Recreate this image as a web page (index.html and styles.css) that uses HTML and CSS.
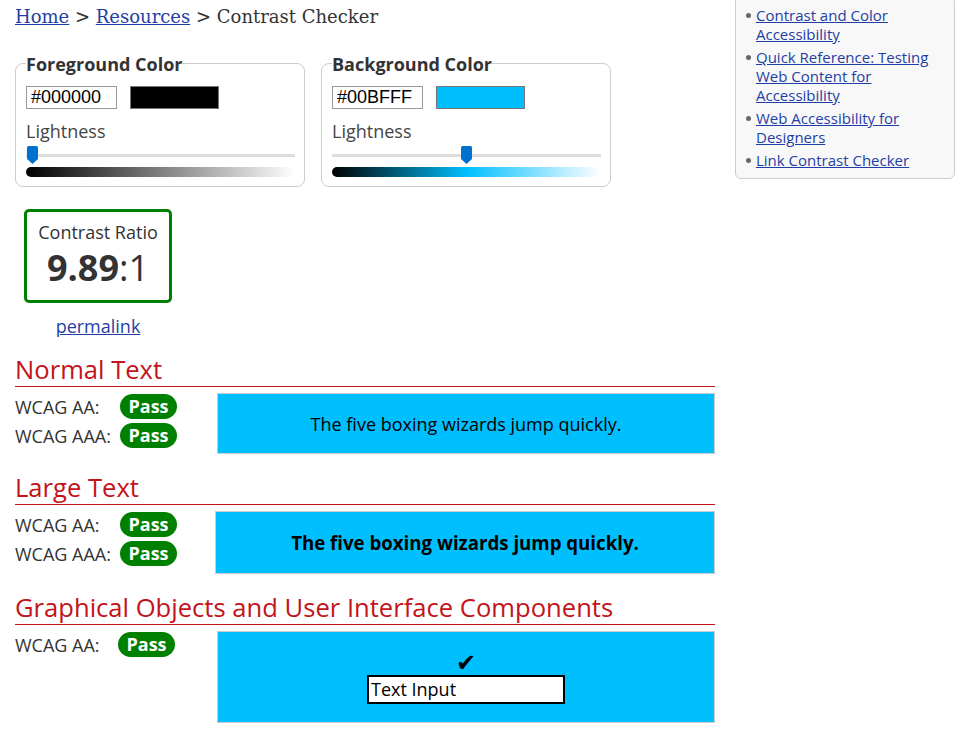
FILE: index.html
```html
<!DOCTYPE html>
<html lang="en">
<head>
<meta charset="utf-8">
<title>Contrast Checker</title>
<link rel="stylesheet" href="styles.css">
</head>
<body>
<div class="page">
  <main class="main">
    <nav class="crumbs"><a href="#">Home</a> &gt; <a href="#">Resources</a> &gt; Contrast Checker</nav>

    <div class="pickers">
      <fieldset class="picker">
        <legend>Foreground Color</legend>
        <div class="color-row">
          <input class="hex" type="text" value="#000000">
          <span class="swatch swatch-fg"></span>
        </div>
        <div class="light-label">Lightness</div>
        <div class="slider">
          <div class="track"></div>
          <svg class="thumb thumb-fg" width="11" height="18" viewBox="0 0 11 18"><path d="M0 1.5Q0 0 1.5 0H9.5Q11 0 11 1.5V13L5.5 18L0 13Z" fill="#0071cf"/></svg>
        </div>
        <div class="grad grad-fg"></div>
      </fieldset>

      <fieldset class="picker">
        <legend>Background Color</legend>
        <div class="color-row">
          <input class="hex" type="text" value="#00BFFF">
          <span class="swatch swatch-bg"></span>
        </div>
        <div class="light-label">Lightness</div>
        <div class="slider">
          <div class="track"></div>
          <svg class="thumb thumb-bg" width="11" height="18" viewBox="0 0 11 18"><path d="M0 1.5Q0 0 1.5 0H9.5Q11 0 11 1.5V13L5.5 18L0 13Z" fill="#0071cf"/></svg>
        </div>
        <div class="grad grad-bg"></div>
      </fieldset>
    </div>

    <div class="ratio-wrap">
      <div class="ratio">
        <div class="ratio-label">Contrast Ratio</div>
        <div class="ratio-value"><b>9.89</b>:1</div>
      </div>
      <a class="permalink" href="#">permalink</a>
    </div>

    <section class="result">
      <h2>Normal Text</h2>
      <div class="result-body">
        <div class="checks">
          <div class="check"><span class="lvl">WCAG AA:</span><span class="pass">Pass</span></div>
          <div class="check"><span class="lvl">WCAG AAA:</span><span class="pass">Pass</span></div>
        </div>
        <div class="sample">The five boxing wizards jump quickly.</div>
      </div>
    </section>

    <section class="result">
      <h2>Large Text</h2>
      <div class="result-body">
        <div class="checks">
          <div class="check"><span class="lvl">WCAG AA:</span><span class="pass">Pass</span></div>
          <div class="check"><span class="lvl">WCAG AAA:</span><span class="pass">Pass</span></div>
        </div>
        <div class="sample sample-large">The five boxing wizards jump quickly.</div>
      </div>
    </section>

    <section class="result">
      <h2>Graphical Objects and User Interface Components</h2>
      <div class="result-body">
        <div class="checks">
          <div class="check"><span class="lvl lvl-ui">WCAG AA:</span><span class="pass">Pass</span></div>
        </div>
        <div class="sample sample-ui">
          <span class="tick">✔</span>
          <span class="fake-input">Text Input</span>
        </div>
      </div>
    </section>
  </main>

  <aside class="side">
    <ul class="links">
      <li><a href="#">Contrast and Color Accessibility</a></li>
      <li><a href="#">Quick Reference: Testing Web Content for Accessibility</a></li>
      <li><a href="#">Web Accessibility for Designers</a></li>
      <li><a href="#">Link Contrast Checker</a></li>
    </ul>
  </aside>
</div>
</body>
</html>
```

FILE: styles.css
```css
* { box-sizing: border-box; }
html, body { margin: 0; padding: 0; background: #fff; }
body {
  font-family: "Open Sans", "Liberation Sans", sans-serif;
  color: #333;
  font-size: 18px;
}
a { color: #1f3fa6; }

.page {
  display: flex;
  gap: 20px;
  align-items: flex-start;
}
.main {
  width: 715px;
  padding-left: 15px;
}

.crumbs {
  font-family: "DejaVu Serif", "Liberation Serif", serif;
  font-size: 18px;
  line-height: 22px;
  padding-top: 6px;
  color: #333;
}

.pickers {
  display: flex;
  gap: 16px;
  margin-top: 23px;
}
.picker {
  width: 290px;
  margin: 0;
  border: 1px solid #ccc;
  border-radius: 8px;
  padding: 0 9px 9px 10px;
}
.picker legend {
  font-weight: 700;
  font-size: 18px;
  line-height: 22px;
  padding: 2px 0 0;
  color: #333;
}
.color-row {
  display: flex;
  gap: 13px;
  margin-top: 11px;
}
.hex {
  width: 91px;
  height: 23px;
  border: 1px solid #999;
  padding: 0 4px;
  font-family: "Liberation Sans", Arial, sans-serif;
  font-size: 18px;
  color: #000;
  margin: 0;
}
.swatch {
  width: 89px;
  height: 23px;
  border: 1px solid #777;
}
.swatch-fg { background: #000; }
.swatch-bg { background: #00bfff; }

.light-label {
  margin-top: 10px;
  line-height: 24px;
  color: #444;
}
.slider {
  position: relative;
  height: 20px;
  margin-top: 3px;
}
.track {
  position: absolute;
  left: 0; right: 0;
  top: 8px;
  height: 3px;
  background: #ddd;
}
.thumb { position: absolute; top: 0; }
.thumb-fg { left: 1px; }
.thumb-bg { left: 129px; }

.grad {
  height: 10px;
  border-radius: 5px;
  margin-top: 1px;
}
.grad-fg { background: linear-gradient(to right, #000, #fff); }
.grad-bg { background: linear-gradient(to right, #000, #00bfff 50%, #fff); }

.ratio-wrap {
  display: flex;
  flex-direction: column;
  align-items: center;
  width: 148px;
  margin: 22px 0 0 9px;
}
.ratio {
  width: 148px;
  height: 94px;
  border: 3px solid #008000;
  border-radius: 5px;
  text-align: center;
  padding-top: 9px;
}
.ratio-label {
  font-size: 18px;
  line-height: 22px;
  color: #333;
}
.ratio-value {
  font-size: 36px;
  line-height: 50px;
  color: #333;
}
.ratio-value b { font-weight: 700; }
.permalink {
  margin-top: 11px;
  font-size: 18px;
  line-height: 24px;
}

.result { margin-top: 17px; }
.result + .result { margin-top: 19px; }
.result h2 {
  margin: 0;
  font-family: "Open Sans", sans-serif;
  font-weight: 400;
  font-size: 25.6px;
  line-height: 30px;
  padding-bottom: 1px;
  color: #c3131b;
  border-bottom: 1px solid #c3131b;
}
.result-body {
  display: flex;
  margin-top: 6px;
}
.checks {
  width: 202px;
  display: flex;
  flex-direction: column;
  gap: 4px;
  padding-top: 1px;
}
.check {
  display: flex;
  align-items: center;
  height: 25px;
}
.lvl {
  width: 105px;
  font-size: 18px;
  color: #333;
}
.lvl-ui { width: 103px; }
.pass {
  width: 57px;
  height: 25px;
  border-radius: 13px;
  background: #008000;
  color: #fff;
  font-weight: 700;
  font-size: 18px;
  text-align: center;
  line-height: 25px;
}
.sample {
  width: 498px;
  height: 61px;
  background: #00bfff;
  border: 1px solid #ccc;
  color: #000;
  display: flex;
  align-items: center;
  justify-content: center;
  font-size: 18px;
}
.sample-large {
  width: 500px;
  margin-left: -2px;
  height: 63px;
  font-weight: 700;
  font-size: 18.66px;
}
.sample-ui {
  height: 92px;
  flex-direction: column;
  gap: 0;
}
.tick {
  font-family: "DejaVu Sans", sans-serif;
  font-size: 24px;
  line-height: 24px;
}
.fake-input {
  width: 198px;
  height: 29px;
  border: 2px solid #000;
  background: #fff;
  font-size: 18px;
  line-height: 25px;
  padding-left: 2px;
  color: #000;
}

.side {
  width: 220px;
  margin-top: -4px;
  background: #f8f8f8;
  border: 1px solid #ccc;
  border-radius: 6px;
}
.links {
  margin: 0;
  padding: 9px 10px 8px 20px;
  list-style: none;
  font-size: 15px;
  line-height: 19px;
}
.links li {
  position: relative;
  margin-bottom: 4px;
}
.links li:last-child { margin-bottom: 0; }
.links li::before {
  content: "";
  position: absolute;
  left: -10px;
  top: 7px;
  width: 5px;
  height: 5px;
  border-radius: 50%;
  background: #666;
}
```
